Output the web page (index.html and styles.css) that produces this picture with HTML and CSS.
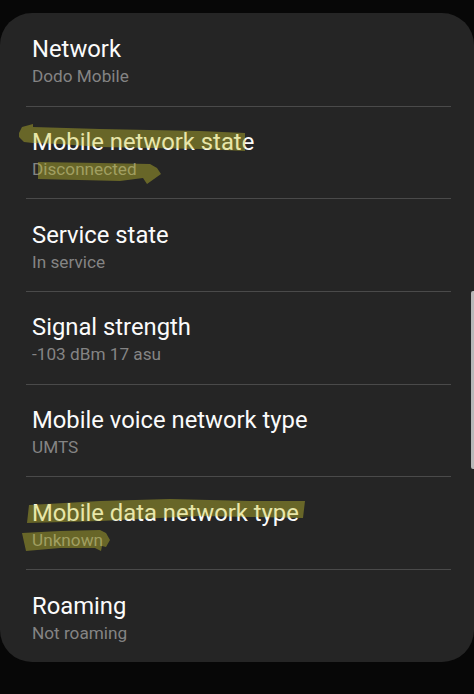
FILE: index.html
```html
<!DOCTYPE html>
<html lang="en">
<head>
<meta charset="utf-8">
<title>Network status</title>
<link rel="stylesheet" href="styles.css">
</head>
<body>
<main class="card">
  <div class="row"><div class="title">Network</div><div class="sub">Dodo Mobile</div></div>
  <div class="row"><div class="title">Mobile network state</div><div class="sub">Disconnected</div></div>
  <div class="row"><div class="title">Service state</div><div class="sub">In service</div></div>
  <div class="row"><div class="title">Signal strength</div><div class="sub">-103 dBm 17 asu</div></div>
  <div class="row"><div class="title">Mobile voice network type</div><div class="sub">UMTS</div></div>
  <div class="row"><div class="title">Mobile data network type</div><div class="sub">Unknown</div></div>
  <div class="row"><div class="title">Roaming</div><div class="sub">Not roaming</div></div>
</main>
<div class="scrollbar"></div>
<svg class="marker" viewBox="0 0 474 694" width="474" height="694" aria-hidden="true">
  <path d="M19 133 L22 127 L33 124 L33 127 L100 129 L200 131 L245 133 L245 151 L200 149 L150 148 L100 147 L60 144 L33 143 L24 142 L19 137 Z"/>
  <path d="M38 162 L100 163 L150 164 L157 168 L161 174 L147 184 L143 178 L120 181 L38 179 Z"/>
  <path d="M29 505 L100 501 L170 499 L250 501 L305 501 L303 518 L250 517 L200 516 L160 518 L100 521 L27 523 Z"/>
  <path d="M22 533 L60 531 L100 530 L106 533 L110 540 L106 547 L102 546 L101 551 L95 548 L60 548 L26 551 Z"/>
</svg>
</body>
</html>
```
FILE: styles.css
```css
html, body {
  margin: 0;
  height: 694px;
  overflow: hidden;
  background: #070707;
}

body {
  position: relative;
  padding-top: 13px;
  box-sizing: border-box;
  font-family: Roboto, "Liberation Sans", sans-serif;
}

.card {
  height: 649px;
  box-sizing: border-box;
  padding-top: 1px;
  background: #252525;
  border-radius: 32px;
  display: flex;
  flex-direction: column;
}

.row {
  height: 92.7px;
  box-sizing: border-box;
  flex: none;
  margin: 0 23px 0 26px;
  padding: 18.3px 0 0 6px;
  border-bottom: 1px solid #4a4a4a;
}

.row:last-child {
  padding-top: 19px;
  border-bottom: none;
}

.title {
  font-size: 23.8px;
  line-height: 34px;
  color: #fbfbfb;
}

.sub {
  font-size: 17.2px;
  line-height: 20px;
  color: #848484;
}

.scrollbar {
  position: absolute;
  top: 291px;
  right: 0;
  width: 3px;
  height: 178px;
  border-radius: 2px 0 0 2px;
  background: #b8b8b8;
}

.marker {
  position: absolute;
  top: 0;
  left: 0;
  pointer-events: none;
}

.marker path {
  fill: rgba(205, 200, 45, 0.4);
}
```
